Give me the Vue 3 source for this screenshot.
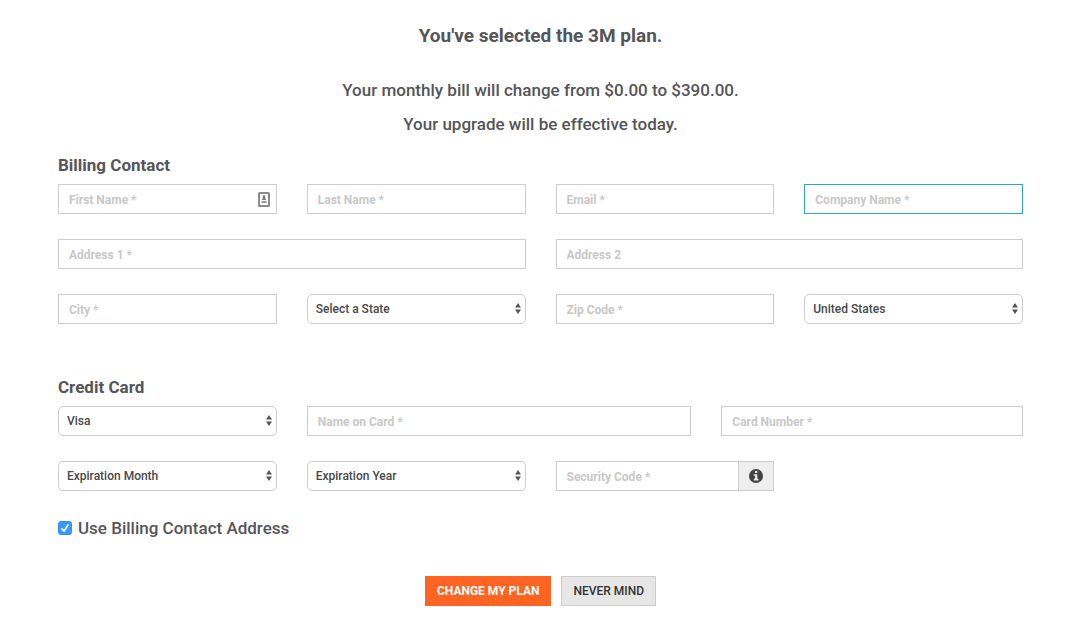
<script setup>
import { reactive } from 'vue'

const form = reactive({
  firstName: '', lastName: '', email: '', company: '',
  address1: '', address2: '', city: '', state: 'Select a State', zip: '', country: 'United States',
  cardType: 'Visa', cardName: '', cardNumber: '',
  month: 'Expiration Month', year: 'Expiration Year', code: '',
  sameAddress: true,
})

const billing = [
  { key: 'firstName', label: 'First Name *', span: 3, icon: true },
  { key: 'lastName', label: 'Last Name *', span: 3 },
  { key: 'email', label: 'Email *', span: 3 },
  { key: 'company', label: 'Company Name *', span: 3, active: true },
  { key: 'address1', label: 'Address 1 *', span: 6 },
  { key: 'address2', label: 'Address 2', span: 6 },
  { key: 'city', label: 'City *', span: 3 },
  { key: 'state', label: 'State', span: 3, options: ['Select a State', 'California', 'New York', 'Texas'] },
  { key: 'zip', label: 'Zip Code *', span: 3 },
  { key: 'country', label: 'Country', span: 3, options: ['United States', 'Canada'] },
]

const card = [
  { key: 'cardType', label: 'Card Type', span: 3, options: ['Visa', 'MasterCard', 'American Express'] },
  { key: 'cardName', label: 'Name on Card *', span: 5 },
  { key: 'cardNumber', label: 'Card Number *', span: 4 },
  { key: 'month', label: 'Expiration Month', span: 3, options: ['Expiration Month', '01', '02', '03'] },
  { key: 'year', label: 'Expiration Year', span: 3, options: ['Expiration Year', '2017', '2018', '2019'] },
  { key: 'code', label: 'Security Code *', span: 3, info: true },
]

const sections = [
  { title: 'Billing Contact', fields: billing },
  { title: 'Credit Card', fields: card },
]
</script>

<template>
  <main class="page">
    <header class="intro">
      <h1>You've selected the 3M plan.</h1>
      <p>Your monthly bill will change from $0.00 to $390.00.</p>
      <p>Your upgrade will be effective today.</p>
    </header>

    <form @submit.prevent>
      <section v-for="s in sections" :key="s.title" class="section">
        <h2>{{ s.title }}</h2>
        <div class="grid">
          <div v-for="f in s.fields" :key="f.key" class="field" :class="'span-' + f.span">
            <template v-if="f.options">
              <select v-model="form[f.key]" class="select" :aria-label="f.label">
                <option v-for="o in f.options" :key="o">{{ o }}</option>
              </select>
              <svg class="arrows" width="6" height="11" viewBox="0 0 6 11" aria-hidden="true">
                <path d="M0 4.5 3 0l3 4.5zM0 6.5h6L3 11z" fill="#555" />
              </svg>
            </template>
            <template v-else>
              <input
                v-model="form[f.key]"
                type="text"
                class="input"
                :class="{ active: f.active }"
                :placeholder="f.label"
                :aria-label="f.label"
              />
              <svg v-if="f.icon" class="autofill" width="12" height="15" viewBox="0 0 12 15" aria-hidden="true">
                <rect x="1" y="1" width="10" height="13" rx="0.5" fill="#fff" stroke="#8c8c8c" stroke-width="2" />
                <path d="M6 3 7.2 4v2.4l1 1.6H3.8l1-1.6V4z" fill="#777" />
                <path d="M3.5 9h5v2h-5z" fill="#999" />
              </svg>
              <button v-if="f.info" type="button" class="info" aria-label="About the security code">
                <svg width="14" height="14" viewBox="0 0 14 14" aria-hidden="true">
                  <circle cx="7" cy="7" r="7" fill="#444" />
                  <path d="M6 2h2.3v2H6zM4.8 5.2h3.5v4.6h1.1v1.6H4.8V9.8H6v-3H4.8z" fill="#eee" />
                </svg>
              </button>
            </template>
          </div>
        </div>
      </section>

      <label class="check">
        <input v-model="form.sameAddress" type="checkbox" />
        <svg class="tick" width="14" height="14" viewBox="0 0 14 14" aria-hidden="true">
          <path d="M3.5 7.5 6 10l4.5-6.5" fill="none" stroke="#fff" stroke-width="1.6" />
        </svg>
        <span>Use Billing Contact Address</span>
      </label>

      <div class="actions">
        <button type="submit" class="btn primary">CHANGE MY PLAN</button>
        <button type="button" class="btn">NEVER MIND</button>
      </div>
    </form>
  </main>
</template>

<style>
body {
  margin: 0;
  background: #fff;
}
</style>

<style scoped>
.page {
  padding: 26px 61px 27px 58px;
  font-family: Roboto, "Liberation Sans", sans-serif;
  font-weight: 500;
  color: #555559;
}
.intro {
  text-align: center;
}
h1 {
  margin: 0 0 32px;
  font-size: 19px;
  line-height: 20px;
  font-weight: 700;
}
p {
  margin: 0 0 10px;
  font-size: 17px;
  line-height: 24px;
}
form {
  margin-top: 19px;
}
.section + .section {
  margin-top: 53px;
}
h2 {
  margin: 0 0 9px;
  font-size: 17px;
  line-height: 20px;
  font-weight: 700;
}
.grid {
  display: grid;
  grid-template-columns: repeat(12, minmax(0, 1fr));
  gap: 25px 30px;
}
.field {
  position: relative;
  display: flex;
}
.span-3 { grid-column: span 3; }
.span-4 { grid-column: span 4; }
.span-5 { grid-column: span 5; }
.span-6 { grid-column: span 6; }
.input,
.select {
  box-sizing: border-box;
  flex: 1;
  min-width: 0;
  height: 30px;
  margin: 0;
  border: 1px solid #ccc;
  background: #fff;
  color: #48484a;
  font-family: inherit;
  font-size: 12px;
  font-weight: 500;
  outline: none;
}
.input {
  padding: 2px 10px 0;
  border-radius: 0;
}
.input::placeholder {
  color: #c8c8c8;
  font-weight: 700;
  opacity: 1;
}
.input.active,
.input:focus {
  border-color: #2ea3d3;
}
.select {
  appearance: none;
  padding: 0 20px 0 8px;
  border-radius: 5px;
}
.arrows {
  position: absolute;
  right: 5px;
  top: 9px;
  pointer-events: none;
}
.autofill {
  position: absolute;
  right: 7px;
  top: 8px;
}
.info {
  box-sizing: border-box;
  display: flex;
  align-items: center;
  justify-content: center;
  width: 36px;
  height: 30px;
  margin-left: -1px;
  padding: 0;
  border: 1px solid #ccc;
  background: #eee;
}
.check {
  position: relative;
  display: flex;
  align-items: center;
  gap: 6px;
  width: fit-content;
  margin-top: 25px;
  font-size: 17px;
  line-height: 24px;
}
.check input {
  appearance: none;
  width: 14px;
  height: 14px;
  margin: 0;
  border: 1px solid #aaa;
  border-radius: 3px;
}
.check input:checked {
  border-color: #318cf8;
  background: #3b99fc;
}
.tick {
  position: absolute;
  left: 0;
  top: 5px;
  pointer-events: none;
}
.actions {
  display: flex;
  justify-content: center;
  gap: 10px;
  margin-top: 36px;
}
.btn {
  height: 30px;
  padding: 0 11px;
  border: 1px solid #ccc;
  border-radius: 0;
  background: #e6e6e6;
  color: #333;
  font-family: inherit;
  font-size: 12px;
  font-weight: 500;
}
.primary {
  border-color: #ff6422;
  background: #ff6422;
  color: #fff;
  font-weight: 700;
}
</style>
